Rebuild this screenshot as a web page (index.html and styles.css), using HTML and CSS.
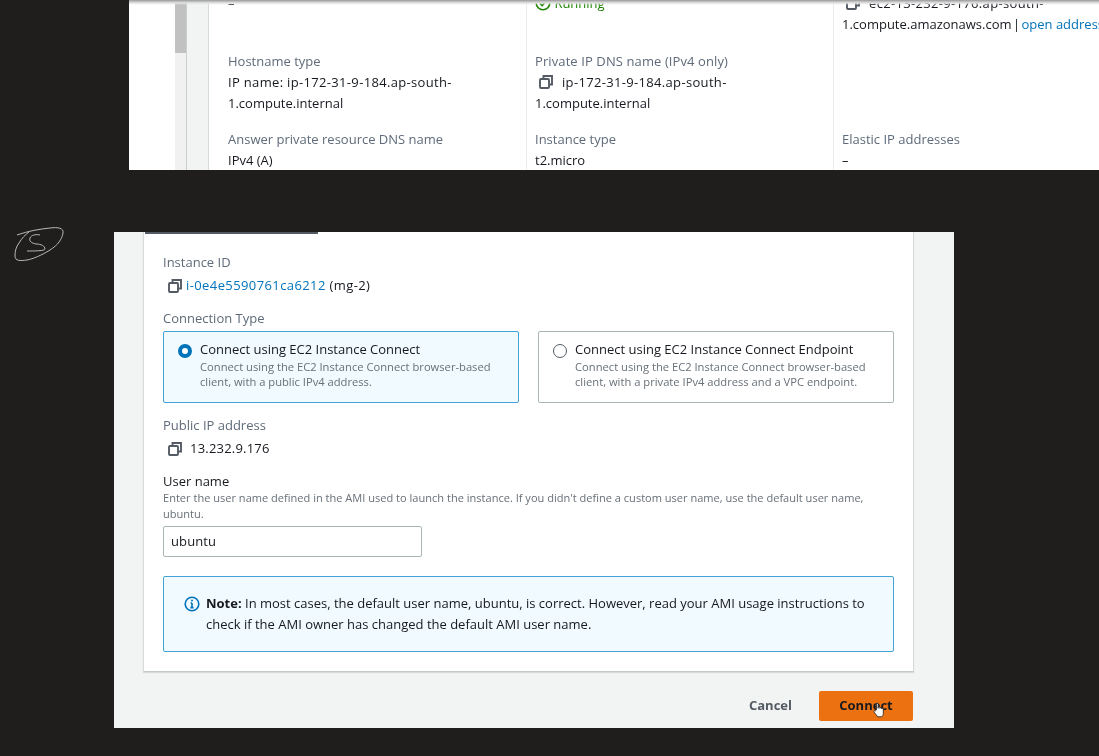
FILE: index.html
```html
<!DOCTYPE html>
<html>
<head>
 <title>EC2 Instance Connect</title>
 <link rel="stylesheet" href="styles.css">
</head>
<body>
<svg class="scribble" width="52" height="38" viewBox="0 0 52 38">
	<path d="M3 9C14 5 26 3 36 2C44 1 50 2 49 7C48 13 44 19 36 24C28 29 19 33 13 34C6 35 1 35 1 30C1 25 2 21 5 17C8 12 11 9 15 6" />
	<path d="M26 9C22 8 17 9 16 12C15 15 17 17 22 18C27 18 31 20 31 23C31 25 20 25 13 25" />
</svg>

<div class="details_panel">
	<div class="panel_shadow"></div>
	<div class="scroll_track"><div class="scroll_thumb"></div></div>
	<div class="side_strip"></div>
	<div class="details_grid">
		<div class="cell">
			<div class="value">–</div>
		</div>
		<div class="cell">
			<div class="value running">
				<svg class="status_icon" width="16" height="16" viewBox="0 0 16 16"><circle cx="8" cy="8" r="6.8" /><path d="M4.8 8.2l2.3 2.3 4.2-4.6" /></svg>
				Running
			</div>
		</div>
		<div class="cell">
			<div class="value"><svg class="copy_icon indent" width="14" height="14" viewBox="0 0 14 14"><path d="M4.5 3.5V1h8.5v8.5h-2.5" /><rect x="1" y="4" width="9" height="9" rx="1" /></svg><span class="wide_text">ec2-13-232-9-176.ap-south-</span><br><span class="tight_words">1.compute.amazonaws.com | </span><a class="link">open address</a></div>
		</div>

		<div class="cell short">
			<div class="label">Hostname type</div>
			<div class="value"><span class="wide_text">IP name: ip-172-31-9-184.ap-south-</span><br>1.compute.internal</div>
		</div>
		<div class="cell short">
			<div class="label wide_label">Private IP DNS name (IPv4 only)</div>
			<div class="value"><svg class="copy_icon indent" width="14" height="14" viewBox="0 0 14 14"><path d="M4.5 3.5V1h8.5v8.5h-2.5" /><rect x="1" y="4" width="9" height="9" rx="1" /></svg><span class="wide_text">ip-172-31-9-184.ap-south-</span><br>1.compute.internal</div>
		</div>
		<div class="cell short"></div>

		<div class="cell">
			<div class="label">Answer private resource DNS name</div>
			<div class="value">IPv4 (A)</div>
		</div>
		<div class="cell">
			<div class="label">Instance type</div>
			<div class="value">t2.micro</div>
		</div>
		<div class="cell">
			<div class="label">Elastic IP addresses</div>
			<div class="value">–</div>
		</div>
	</div>
</div>

<div class="connect_modal">
	<div class="connect_card">
		<div class="tab_line"></div>

		<div class="field first">
			<div class="label">Instance ID</div>
			<div class="value id_row"><svg class="copy_icon" width="14" height="14" viewBox="0 0 14 14"><path d="M4.5 3.5V1h8.5v8.5h-2.5" /><rect x="1" y="4" width="9" height="9" rx="1" /></svg><span class="id_text"><a class="link">i-0e4e5590761ca6212</a> (mg-2)</span></div>
		</div>

		<div class="label type_label">Connection Type</div>
		<div class="type_row">
			<div class="type_box selected">
				<span class="radio on"></span>
				<div>
					<div class="type_title">Connect using EC2 Instance Connect</div>
					<div class="type_desc">Connect using the EC2 Instance Connect browser-based<br>client, with a public IPv4 address.</div>
				</div>
			</div>
			<div class="type_box">
				<span class="radio"></span>
				<div>
					<div class="type_title">Connect using EC2 Instance Connect Endpoint</div>
					<div class="type_desc">Connect using the EC2 Instance Connect browser-based<br>client, with a private IPv4 address and a VPC endpoint.</div>
				</div>
			</div>
		</div>

		<div class="field ip_field">
			<div class="label">Public IP address</div>
			<div class="value ip_row"><svg class="copy_icon" width="14" height="14" viewBox="0 0 14 14"><path d="M4.5 3.5V1h8.5v8.5h-2.5" /><rect x="1" y="4" width="9" height="9" rx="1" /></svg><span>13.232.9.176</span></div>
		</div>

		<div class="user_title">User name</div>
		<div class="user_desc">Enter the user name defined in the AMI used to launch the instance. If you didn't define a custom user name, use the default user name,<br>ubuntu.</div>
		<div class="user_input">ubuntu</div>

		<div class="note_box">
			<svg class="info_icon" width="16" height="16" viewBox="0 0 16 16"><circle cx="8" cy="8" r="6.8" /><path d="M8 7v4.6M6.4 11.6h3.2M6.6 7H8" /><circle class="dot" cx="8" cy="4.6" r="1" /></svg>
			<div><b>Note:</b> In most cases, the default user name, ubuntu, is correct. However, read your AMI usage instructions to<br>check if the AMI owner has changed the default AMI user name.</div>
		</div>
	</div>

	<div class="modal_footer">
		<span class="cancel_btn">Cancel</span>
		<span class="connect_btn">Connect
			<svg class="hand_cursor" width="12" height="16" viewBox="0 0 14 18"><path d="M4 9V2.2C4 .8 6 .8 6 2.2V7l0-1.2c0-1.2 2-1.2 2 0V7c0-1 2-1 2 0v.6c0-1 2-1 2 0V13c0 2-1 3-2 4H5.500C4.500 15.500 2.800 13.500 1.300 11.500C.3 10 1.800 8.800 3 10Z" /></svg>
		</span>
	</div>
</div>
</body>
</html>
```

FILE: styles.css
```css
html, body {
	margin: 0;
	padding: 0;
}

body {
	position: relative;
	height: 756px;
	overflow: hidden;
	background: #1f1e1d;
	font-family: "Open Sans", "Noto Sans", Arial, sans-serif;
	font-size: 13px;
	color: #16191f;
}

.scribble {
	position: absolute;
	left: 14px;
	top: 226px;
	fill: none;
	stroke: #b9b9b7;
	stroke-width: 1;
	filter: blur(0.3px);
}

.label { color: #5f6b7a; line-height: 21px; }
.value { color: #16191f; line-height: 21px; }
.link { color: #0073bb; text-decoration: none; }
.wide_text { letter-spacing: 0.33px; }
.wide_label { letter-spacing: 0.1px; }
.tight_words { word-spacing: -2px; }
.id_text { letter-spacing: 0.4px; }

.copy_icon {
	fill: none;
	stroke: #545b64;
	stroke-width: 1.900;
	flex: none;
}
.copy_icon.indent {
	vertical-align: -2px;
	margin: 0 9px 0 4px;
}

/* upper clipped details panel */
.details_panel {
	position: relative;
	display: flex;
	height: 170px;
	margin-left: 129px;
	overflow: hidden;
	background: #fff;
	padding-left: 46px;
	filter: blur(0.35px);
}
.panel_shadow {
	position: absolute;
	left: 0;
	right: 0;
	top: 0;
	height: 5px;
	background: linear-gradient(to bottom, #9a9a9a 0%, #e4e4e4 60%, rgba(255,255,255,0) 100%);
}
.scroll_track {
	width: 11px;
	background: #f1f1f1;
	flex: none;
}
.scroll_thumb {
	height: 53px;
	background: #c1c1c1;
}
.side_strip {
	width: 21px;
	flex: none;
	background: #f2f3f3;
	border-left: 1px solid #c9cfcf;
	border-right: 1px solid #d5dbdb;
}
.details_grid {
	display: grid;
	grid-template-columns: 318px 307px 1fr;
	grid-auto-rows: min-content;
	flex: 1;
	margin-top: -7px;
	min-width: 0;
}
.cell {
	padding: 0 0 16px 19px;
	border-right: 1px solid #eaeded;
	white-space: nowrap;
}
.cell.short { padding-bottom: 15px; }
.cell:nth-child(3n+2) { padding-left: 8px; }
.cell:nth-child(3n) { padding-left: 8px; border-right: 0; }
.running { color: #1d8102; }
.status_icon {
	vertical-align: -3px;
	fill: none;
	stroke: #1d8102;
	stroke-width: 1.600;
}

/* connect modal */
.connect_modal {
	margin: 62px 0 0 114px;
	width: 840px;
	height: 496px;
	background: #f2f3f3;
	padding-left: 29px;
	box-sizing: border-box;
	filter: blur(0.35px);
}
.connect_card {
	width: 771px;
	height: 440px;
	box-sizing: border-box;
	background: #fff;
	border-left: 1px solid #d5dbdb;
	border-right: 1px solid #d5dbdb;
	border-bottom: 1px solid #c3c8c8;
	box-shadow: 0 1px 1px rgba(0,0,0,0.1);
	padding: 0 19px;
}
.tab_line {
	width: 173px;
	height: 2px;
	margin: 1px 0 0 1px;
	background: #545b64;
	position: relative;
	left: -19px;
}
.field.first { margin-top: 18px; }
.id_row { display: flex; align-items: center; gap: 4px; margin: 2px 0 0 5px; }
.type_label { margin-top: 12px; }
.type_row {
	display: flex;
	gap: 19px;
	margin-top: 2px;
}
.type_box {
	display: flex;
	gap: 8px;
	flex: none;
	width: 356px;
	height: 72px;
	box-sizing: border-box;
	padding: 7px 14px;
	border: 1px solid #aab7b8;
	border-radius: 2px;
	background: #fff;
}
.type_box.selected {
	border-color: #44a2d8;
	background: #f1faff;
}
.radio {
	flex: none;
	width: 14px;
	height: 14px;
	margin-top: 5px;
	box-sizing: border-box;
	border: 1px solid #545b64;
	border-radius: 50%;
	background: #fff;
}
.radio.on { border: 4px solid #0073bb; }
.type_title { line-height: 20px; color: #16191f; }
.type_desc { font-size: 11.200px; line-height: 15px; color: #687078; }

.ip_field { margin-top: 12px; }
.ip_row { display: flex; align-items: center; gap: 8px; margin: 2px 0 0 5px; letter-spacing: 0.2px; }
.user_title { margin-top: 12px; line-height: 21px; }
.user_desc { font-size: 11.060px; line-height: 16px; color: #687078; white-space: nowrap; margin-top: -2px; }
.user_input {
	width: 259px;
	height: 31px;
	box-sizing: border-box;
	margin-top: 4px;
	padding: 0 7px;
	line-height: 29px;
	border: 1px solid #aab7b8;
	border-radius: 2px;
	letter-spacing: 0.1px;
}
.note_box {
	display: flex;
	gap: 6px;
	width: 731px;
	height: 76px;
	box-sizing: border-box;
	margin-top: 19px;
	padding: 16px 20px;
	border: 1px solid #44a2d8;
	border-radius: 2px;
	background: #f1faff;
	line-height: 21px;
	white-space: nowrap;
}
.info_icon {
	flex: none;
	margin-top: 3px;
	fill: none;
	stroke: #0073bb;
	stroke-width: 1.600;
}
.info_icon .dot { fill: #0073bb; stroke: none; }

.modal_footer {
	display: flex;
	justify-content: flex-end;
	align-items: flex-start;
	gap: 27px;
	width: 770px;
	padding-top: 19px;
	font-weight: 700;
}
.cancel_btn { color: #545b64; line-height: 28px; }
.connect_btn {
	position: relative;
	display: block;
	width: 94px;
	height: 30px;
	line-height: 28px;
	text-align: center;
	background: #ec7211;
	border-radius: 2px;
	color: #16191f;
}
.hand_cursor {
	position: absolute;
	left: 54px;
	top: 11px;
	fill: #fff;
	stroke: #222;
	stroke-width: 1;
}
```
